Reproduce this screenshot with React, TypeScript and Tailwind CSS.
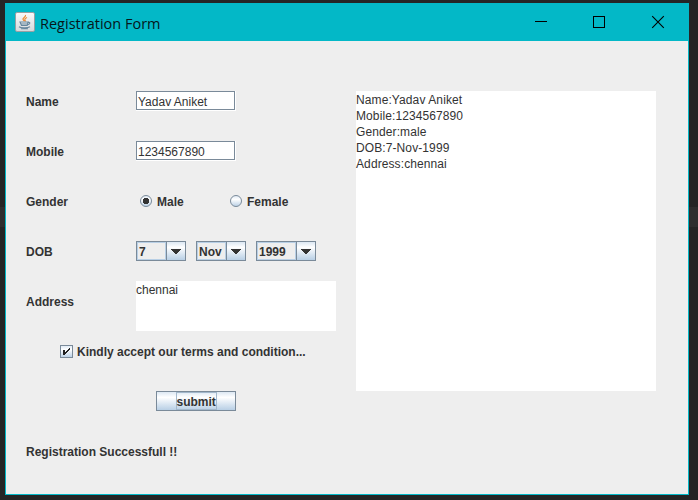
import type { ReactNode } from "react";

function Label({ children, className = "" }: { children: ReactNode; className?: string }) {
  return (
    <span className={`block shrink-0 whitespace-pre text-[12px] font-bold leading-[20px] text-[#333] ${className}`}>
      {children}
    </span>
  );
}

function TextField({ value, className = "" }: { value: string; className?: string }) {
  return (
    <div className="h-[20px] w-[100px] border-r border-b border-white">
      <div className="h-[19px] w-[99px] border border-[#7a8a99] bg-white pl-px">
        <span className={`block whitespace-pre pt-px text-[12px] leading-[18px] text-[#333] ${className}`}>{value}</span>
      </div>
    </div>
  );
}

function Combo({ value, className, textClass = "" }: { value: string; className: string; textClass?: string }) {
  return (
    <div className={`flex h-[20px] border border-[#7a8a99] ${className}`}>
      <div className="flex-1 border border-[#b8cfe5] pl-px">
        <Label className={`-mt-px ${textClass}`}>{value}</Label>
      </div>
      <div className="flex w-[19px] items-center justify-center border-l border-[#7a8a99] bg-linear-to-b from-[#dde8f3] via-white via-30% to-[#b8cfe5]">
        <svg width="10" height="5" viewBox="0 0 10 5" shapeRendering="crispEdges">
          <path d="M0 0h10v1H9v1H8v1H7v1H6v1H4V4H3V3H2V2H1V1H0z" fill="#333" />
        </svg>
      </div>
    </div>
  );
}

function Radio({ checked = false }: { checked?: boolean }) {
  return (
    <svg width="12" height="12" viewBox="0 0 12 12" className="shrink-0">
      <defs>
        <linearGradient id="radioFill" x1="0" y1="0" x2="0" y2="1">
          <stop offset="0" stopColor="#dde8f3" />
          <stop offset="0.35" stopColor="#fff" />
          <stop offset="1" stopColor="#b8cfe5" />
        </linearGradient>
      </defs>
      <circle cx="6" cy="6" r="5.5" fill="url(#radioFill)" stroke="#7a8a99" />
      {checked && <path d="M4 3h4v1h1v4H8v1H4V8H3V4h1z" fill="#333" shapeRendering="crispEdges" />}
    </svg>
  );
}

function JavaIcon() {
  return (
    <svg width="20" height="20" viewBox="0 0 20 20">
      <defs>
        <linearGradient id="tile" x1="0" y1="0" x2="0" y2="1">
          <stop offset="0" stopColor="#fafafa" />
          <stop offset="1" stopColor="#d5d9dc" />
        </linearGradient>
      </defs>
      <rect x="0.5" y="0.5" width="19" height="19" rx="1.5" fill="url(#tile)" stroke="#999fa3" />
      <path d="M10.5 3c.8 2-3 2.700-2.500 4.300.2.800 1.200 1.200 1.300 2M12 5.500c-1.500.8-2.500 1.400-2 2.300.4.600.5 1-.1 1.700" fill="none" stroke="#ee8b35" strokeWidth="1.200" />
      <path d="M5 10h8l-.8 3.500H6.500zM12.800 10.500c3-.8 2.500 1.500-.3 2.300" fill="none" stroke="#67879e" strokeWidth="1.100" />
      <path d="M6 12h6.500M4 14.800c2 1.500 9 1.300 11 0M6 16.700h7" fill="none" stroke="#67879e" strokeWidth="1.200" />
    </svg>
  );
}

function TitleBar() {
  return (
    <header className="flex h-[37px] items-start bg-[#03b8c7]">
      <div className="ml-[9px] mt-[8px] h-[20px] w-[20px]"><JavaIcon /></div>
      <h1 className="ml-[5px] mt-[8px] flex-1 font-['Open_Sans',sans-serif] text-[15px] leading-[22px] text-[#06161a]">
        <span className="inline-block origin-left scale-x-[0.967] whitespace-pre">Registration Form</span>
      </h1>
      <svg width="154" height="37" viewBox="0 0 154 37" fill="none" stroke="#000" className="shrink-0">
        <path d="M1 17.500h12M59.500 12.500h11v11h-11z" shapeRendering="crispEdges" />
        <path d="M118.200 12.200l11.600 11.600M129.800 12.200l-11.600 11.600" strokeWidth="1.100" />
      </svg>
    </header>
  );
}

const output: [string, string][] = [
  ["Name:Yadav Aniket", "tracking-[0.1px]"],
  ["Mobile:1234567890", "tracking-[0.1px]"],
  ["Gender:male", "tracking-[0.1px]"],
  ["DOB:7-Nov-1999", "tracking-[0.1px]"],
  ["Address:chennai", "tracking-[0.1px]"],
];

export default function App() {
  return (
    <div className="h-[500px] w-[698px] overflow-hidden bg-[linear-gradient(#252525_0_207px,#2e2e2e_207px_227px,#252525_227px)] pl-[5px] pt-[3px] font-['Liberation_Sans',Arial,sans-serif]">
      <div className="h-[492px] w-[684px] border border-[#03b8c7] bg-[#eee]">
        <TitleBar />
        <main className="flex pl-[20px] pt-[50px]">
          <form className="w-[330px]">
            <div className="flex h-[50px]">
              <Label className="w-[110px] pt-px">Name</Label>
              <TextField value="Yadav Aniket" />
            </div>
            <div className="flex h-[50px]">
              <Label className="w-[110px] pt-px">Mobile</Label>
              <TextField value="1234567890" />
            </div>
            <div className="flex h-[50px]">
              <Label className="w-[110px] pt-px">Gender</Label>
              <div className="flex h-[20px] w-[90px] items-center pl-[4px]">
                <Radio checked />
                <Label className="pl-[5px] pt-px">Male</Label>
              </div>
              <div className="flex h-[20px] items-center pl-[4px]">
                <Radio />
                <Label className="pl-[5px] pt-px">Female</Label>
              </div>
            </div>
            <div className="flex h-[40px]">
              <Label className="w-[110px] pt-px">DOB</Label>
              <div className="flex gap-[10px]">
                <Combo value="7" className="w-[50px]" />
                <Combo value="Nov" className="w-[50px]" />
                <Combo value="1999" className="w-[60px]" />
              </div>
            </div>
            <div className="flex h-[60px]">
              <Label className="w-[110px] pt-[11px]">Address</Label>
              <div className="h-[50px] w-[200px] bg-white pt-px text-[12px] leading-[16px] text-[#333]">chennai</div>
            </div>
            <div className="flex h-[50px] pl-[34px]">
              <svg width="13" height="13" viewBox="0 0 13 13" className="mt-[4px] shrink-0">
                <rect x="0.500" y="0.500" width="12" height="12" fill="url(#radioFill)" stroke="#7a8a99" />
                <path d="M3 5h2v2h1V6h1V5h1V4h1V3h1v2H9v1H8v1H7v1H6v1H5v1H3z" fill="#222" shapeRendering="crispEdges" />
              </svg>
              <Label className="pl-[4px] pt-px">Kindly accept our terms and condition...</Label>
            </div>
            <div className="flex h-[50px] pl-[130px]">
              <div className="flex h-[20px] w-[80px] justify-center border border-[#7a8a99] bg-linear-to-b from-[#dde8f3] via-white via-30% to-[#b8cfe5]">
                <div className="h-[18px] w-[41px] border border-[#a3b8cc]">
                  <Label className="-mt-px">submit</Label>
                </div>
              </div>
            </div>
            <Label className="pt-px">Registration Successfull !!</Label>
          </form>
          <section className="h-[300px] w-[300px] bg-white pt-px">
            {output.map(([line, spacing]) => (
              <p key={line} className={`h-[16px] whitespace-pre text-[12px] leading-[16px] text-[#333] ${spacing}`}>{line}</p>
            ))}
          </section>
        </main>
      </div>
    </div>
  );
}
